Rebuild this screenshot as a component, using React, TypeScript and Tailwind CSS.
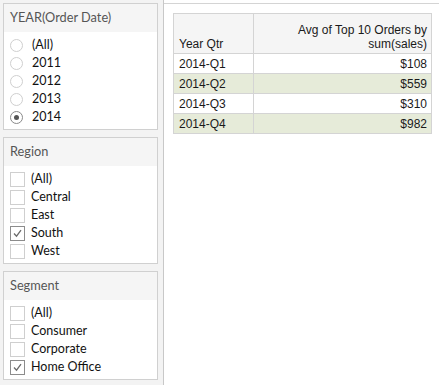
import React from 'react';

const years = ['(All)', '2011', '2012', '2013', '2014'];
const regions = ['(All)', 'Central', 'East', 'South', 'West'];
const segments = ['(All)', 'Consumer', 'Corporate', 'Home Office'];

const rows = [
  { qtr: '2014-Q1', value: '$108' },
  { qtr: '2014-Q2', value: '$559' },
  { qtr: '2014-Q3', value: '$310' },
  { qtr: '2014-Q4', value: '$982' },
];

function Radio({ checked }: { checked: boolean }) {
  return (
    <span
      className={`ml-[6px] mr-[9px] flex h-[13px] w-[13px] shrink-0 items-center justify-center rounded-full border bg-white ${
        checked ? 'border-[#8a8a8a]' : 'border-[#cfcfcf]'
      }`}
    >
      {checked && <span className="h-[5px] w-[5px] rounded-full bg-[#555]" />}
    </span>
  );
}

function Checkbox({ checked }: { checked: boolean }) {
  return (
    <span
      className={`ml-[6px] mr-[6px] flex h-[15px] w-[15px] shrink-0 items-center justify-center border bg-white ${
        checked ? 'border-[#8c8c8c]' : 'border-[#cfcfcf]'
      }`}
    >
      {checked && (
        <svg width="11" height="11" viewBox="0 0 11 11">
          <path d="M2 5.5 L4.5 8.2 L9 2.2" fill="none" stroke="#6b6b6b" strokeWidth="1.3" />
        </svg>
      )}
    </span>
  );
}

function FilterCard({
  title,
  items,
  selected,
  kind,
}: {
  title: string;
  items: string[];
  selected: string;
  kind: 'radio' | 'check';
}) {
  return (
    <div className="border border-[#d0d0d0] bg-white pb-[3px]">
      <div className="flex h-[28px] items-center bg-[#f5f5f5] pl-[6px] text-[12.75px] text-[#555]">{title}</div>
      <div className="pt-[4px]">
        {items.map((it) => (
          <div key={it} className="flex h-[18px] items-center">
            {kind === 'radio' ? <Radio checked={it === selected} /> : <Checkbox checked={it === selected} />}
            <span className="text-[12.5px] text-[#111]">{it}</span>
          </div>
        ))}
      </div>
    </div>
  );
}

export default function App() {
  return (
    <div
      className="flex h-[385px] w-[439px] overflow-hidden bg-white"
      style={{ fontFamily: 'Lato, "Open Sans", sans-serif' }}
    >
      {/* Filters */}
      <div className="flex w-[163px] flex-col gap-[7px] bg-[#f3f3f3] pl-[3px] pr-[5px] pt-[3px]">
        <FilterCard title="YEAR(Order Date)" items={years} selected="2014" kind="radio" />
        <FilterCard title="Region" items={regions} selected="South" kind="check" />
        <FilterCard title="Segment" items={segments} selected="Home Office" kind="check" />
      </div>

      {/* Crosstab */}
      <div className="flex-1 border-l border-[#c8c8c8]">
        <div className="mt-[3px] border-t border-[#d4d4d4] pl-[9px] pt-[9px]">
          <table
            className="border-collapse text-[12px] text-[#1a1a1a]"
            style={{ fontFamily: '"Liberation Sans", sans-serif' }}
          >
            <thead>
              <tr className="bg-[#f5f5f5]">
                <th className="h-[40px] w-[80px] border border-[#d4d4d4] pb-[2px] pl-[5px] text-left align-bottom font-normal leading-[14px]">
                  Year Qtr
                </th>
                <th className="w-[178px] border border-[#d4d4d4] pb-[2px] pr-[4px] text-right align-bottom font-normal leading-[14px]">
                  Avg of Top 10 Orders by
                  <br />
                  sum(sales)
                </th>
              </tr>
            </thead>
            <tbody>
              {rows.map((r, i) => (
                <tr key={r.qtr} className={i % 2 === 1 ? 'bg-[#e6ebd9]' : 'bg-white'}>
                  <td className="h-[20px] border border-[#d4d4d4] pl-[5px] leading-[14px]">{r.qtr}</td>
                  <td className="border border-[#d4d4d4] pr-[4px] text-right leading-[14px]">{r.value}</td>
                </tr>
              ))}
            </tbody>
          </table>
        </div>
      </div>
    </div>
  );
}
